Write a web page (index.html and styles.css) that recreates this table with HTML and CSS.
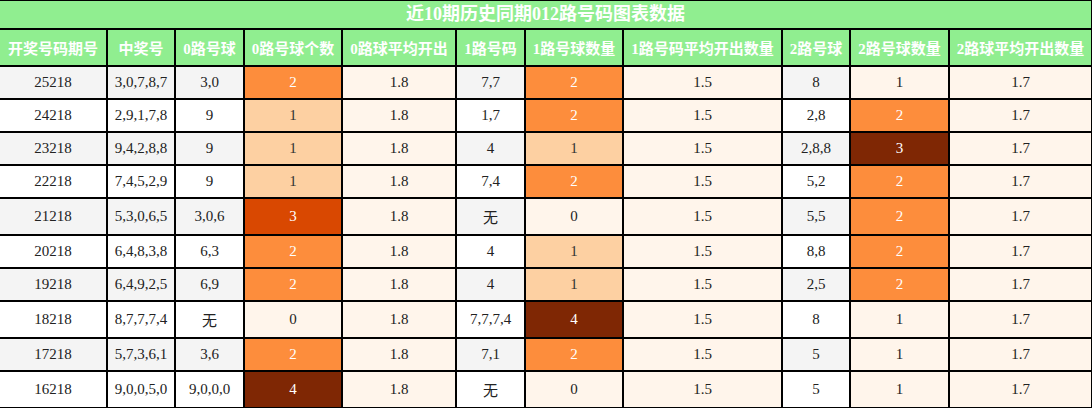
FILE: index.html
```html
<!DOCTYPE html>
<html lang="zh">
<head>
<meta charset="utf-8">
<title>近10期历史同期012路号码图表数据</title>
<link rel="stylesheet" href="styles.css">
</head>
<body>
<table class="chart">
  <colgroup>
    <col class="c1"><col class="c2"><col class="c3"><col class="c4"><col class="c5"><col class="c6"><col class="c7"><col class="c8"><col class="c9"><col class="c10"><col class="c11">
  </colgroup>
  <thead>
    <tr class="title-row"><th colspan="11">近10期历史同期012路号码图表数据</th></tr>
    <tr class="head-row">
      <th>开奖号码期号</th><th>中奖号</th><th>0路号球</th><th>0路号球个数</th><th>0路球平均开出</th><th>1路号码</th><th>1路号球数量</th><th>1路号码平均开出数量</th><th>2路号球</th><th>2路号球数量</th><th>2路球平均开出数量</th>
    </tr>
  </thead>
  <tbody>
    <tr class="odd"><td>25218</td><td>3,0,7,8,7</td><td>3,0</td><td class="h h2">2</td><td class="avg">1.8</td><td>7,7</td><td class="h h2">2</td><td class="avg">1.5</td><td>8</td><td class="h h0">1</td><td class="avg">1.7</td></tr>
    <tr><td>24218</td><td>2,9,1,7,8</td><td>9</td><td class="h h1">1</td><td class="avg">1.8</td><td>1,7</td><td class="h h2">2</td><td class="avg">1.5</td><td>2,8</td><td class="h h2">2</td><td class="avg">1.7</td></tr>
    <tr class="odd"><td>23218</td><td>9,4,2,8,8</td><td>9</td><td class="h h1">1</td><td class="avg">1.8</td><td>4</td><td class="h h1">1</td><td class="avg">1.5</td><td>2,8,8</td><td class="h h4">3</td><td class="avg">1.7</td></tr>
    <tr><td>22218</td><td>7,4,5,2,9</td><td>9</td><td class="h h1">1</td><td class="avg">1.8</td><td>7,4</td><td class="h h2">2</td><td class="avg">1.5</td><td>5,2</td><td class="h h2">2</td><td class="avg">1.7</td></tr>
    <tr class="odd"><td>21218</td><td>5,3,0,6,5</td><td>3,0,6</td><td class="h h3">3</td><td class="avg">1.8</td><td>无</td><td class="h h0">0</td><td class="avg">1.5</td><td>5,5</td><td class="h h2">2</td><td class="avg">1.7</td></tr>
    <tr><td>20218</td><td>6,4,8,3,8</td><td>6,3</td><td class="h h2">2</td><td class="avg">1.8</td><td>4</td><td class="h h1">1</td><td class="avg">1.5</td><td>8,8</td><td class="h h2">2</td><td class="avg">1.7</td></tr>
    <tr class="odd"><td>19218</td><td>6,4,9,2,5</td><td>6,9</td><td class="h h2">2</td><td class="avg">1.8</td><td>4</td><td class="h h1">1</td><td class="avg">1.5</td><td>2,5</td><td class="h h2">2</td><td class="avg">1.7</td></tr>
    <tr><td>18218</td><td>8,7,7,7,4</td><td>无</td><td class="h h0">0</td><td class="avg">1.8</td><td>7,7,7,4</td><td class="h h4">4</td><td class="avg">1.5</td><td>8</td><td class="h h0">1</td><td class="avg">1.7</td></tr>
    <tr class="odd"><td>17218</td><td>5,7,3,6,1</td><td>3,6</td><td class="h h2">2</td><td class="avg">1.8</td><td>7,1</td><td class="h h2">2</td><td class="avg">1.5</td><td>5</td><td class="h h0">1</td><td class="avg">1.7</td></tr>
    <tr><td>16218</td><td>9,0,0,5,0</td><td>9,0,0,0</td><td class="h h4">4</td><td class="avg">1.8</td><td>无</td><td class="h h0">0</td><td class="avg">1.5</td><td>5</td><td class="h h0">1</td><td class="avg">1.7</td></tr>
  </tbody>
</table>
</body>
</html>
```

FILE: styles.css
```css
html, body {
  margin: 0;
  padding: 0;
  background: #ffffff;
}

body {
  font-family: "Liberation Serif", "Noto Sans CJK SC", serif;
  font-size: 15px;
  color: #222222;
  overflow: hidden;
}

.chart {
  border-collapse: collapse;
  table-layout: fixed;
  width: 1093px;
  margin: -1px 0 0 -2px;
}

.c1 { width: 108px; }
.c2 { width: 68px; }
.c3 { width: 69px; }
.c4 { width: 98px; }
.c5 { width: 114px; }
.c6 { width: 69px; }
.c7 { width: 98px; }
.c8 { width: 159px; }
.c9 { width: 68px; }
.c10 { width: 99px; }
.c11 { width: 143px; }

.chart th,
.chart td {
  border: 2px solid #000000;
  text-align: center;
  padding: 7px 0;
  white-space: nowrap;
  overflow: hidden;
}

.chart th {
  background: #90ee90;
  color: #ffffff;
  font-weight: bold;
}

.title-row th {
  font-size: 18px;
  line-height: 27px;
  padding: 0;
}

.head-row th {
  font-size: 15px;
}

.chart tbody td {
  background: #ffffff;
}

.chart tbody tr.odd td {
  background: #f4f4f4;
}

.chart tbody td.avg,
.chart tbody tr.odd td.avg {
  background: #fff5eb;
}

.chart tbody td.h0,
.chart tbody tr.odd td.h0 {
  background: #fff5eb;
  color: #222222;
}

.chart tbody td.h1,
.chart tbody tr.odd td.h1 {
  background: #fdd0a2;
  color: #333333;
}

.chart tbody td.h2,
.chart tbody tr.odd td.h2 {
  background: #fd8d3c;
  color: #ffffff;
}

.chart tbody td.h3,
.chart tbody tr.odd td.h3 {
  background: #d94801;
  color: #ffffff;
}

.chart tbody td.h4,
.chart tbody tr.odd td.h4 {
  background: #7f2704;
  color: #ffffff;
}
```
